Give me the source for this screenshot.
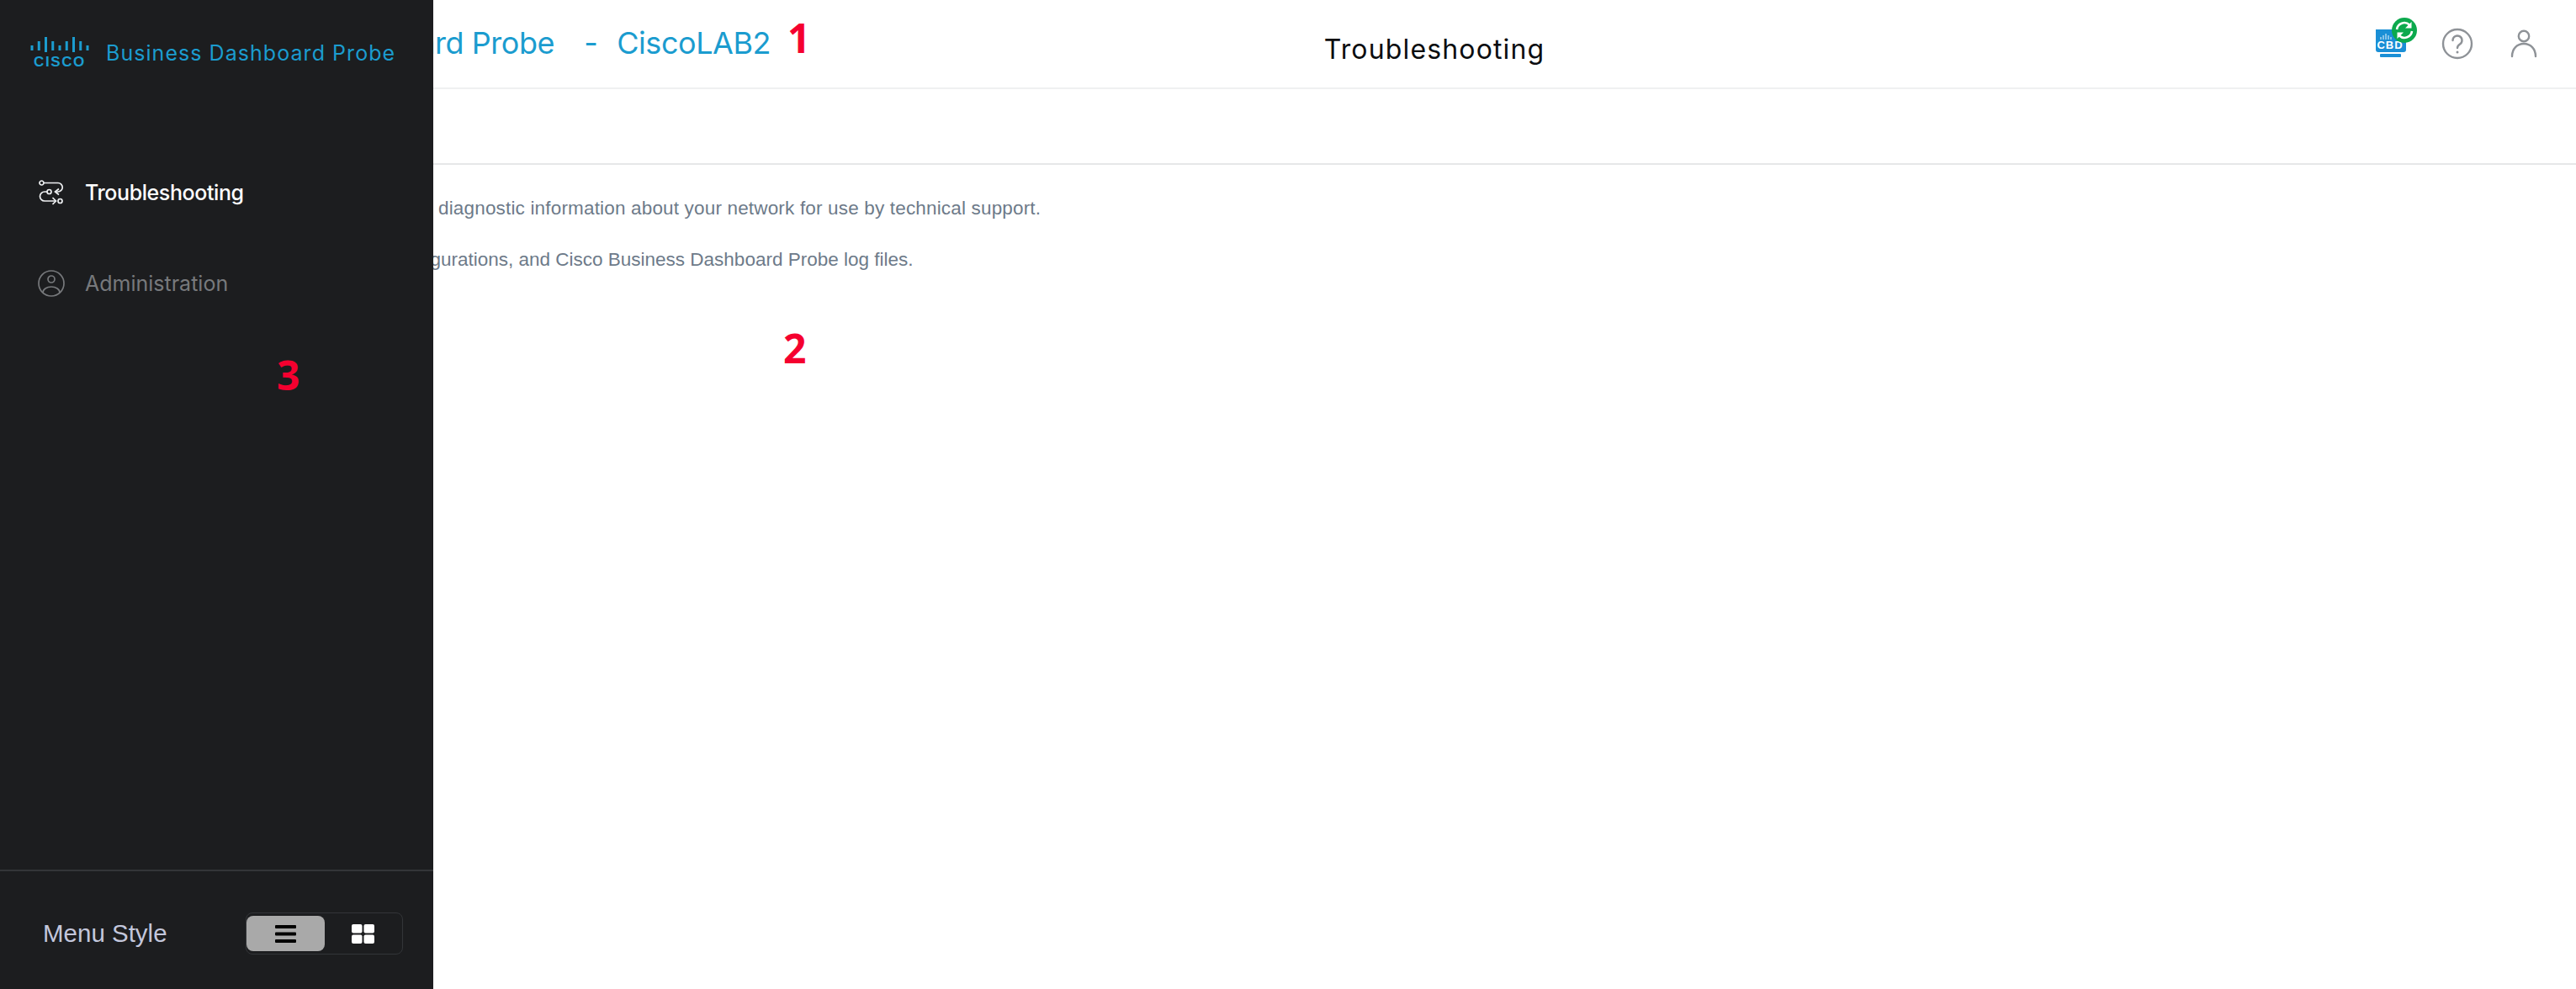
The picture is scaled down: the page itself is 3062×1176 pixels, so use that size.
<script>
	let menuStyle = 'list'
</script>

<div class="page">
	<header>
		<div class="brand">
			<span>Cisco Business Dashboard Probe</span>
			<span class="dash">-</span>
			<span>CiscoLAB2</span>
		</div>
		<h1>Troubleshooting</h1>
		<div class="tools">
			<svg class="cbd" width="60" height="50" viewBox="0 0 60 50">
				<path d="M4 15h33a3 3 0 0 1 3 3v21a3 3 0 0 1-3 3H7a3 3 0 0 1-3-3z" fill="#1a8fd6"/>
				<rect x="9" y="44" width="25" height="4" rx="1" fill="#1a8fd6"/>
				<path d="M10 24v3M13 22v5M16 20v7M19 22v5M22 24v3" stroke="#cfe8f6" stroke-width="1.2"/>
				<text x="21" y="38" class="cbd-text">CBD</text>
				<circle cx="38" cy="16" r="15" fill="#0ca94d"/>
				<g fill="none" stroke="#fff" stroke-width="2.6">
					<path d="M29 15a9 9 0 0 1 15-5.500"/>
					<path d="M47 17a9 9 0 0 1-15 5.500"/>
				</g>
				<path d="M46.500 6v7.500H39zM29.500 26v-7.500H37z" fill="#fff"/>
			</svg>
			<svg width="38" height="38" viewBox="0 0 38 38" fill="none" stroke="#8e9297" stroke-width="2.4">
				<circle cx="19" cy="19" r="17"/>
				<path d="M13.500 15a5.500 5.500 0 1 1 8.500 4.600c-2 1.300-3 2.200-3 4.400" stroke-linecap="round"/>
				<circle cx="19" cy="29" r="1.500" fill="#8e9297" stroke="none"/>
			</svg>
			<svg width="32" height="34" viewBox="0 0 32 34" fill="none" stroke="#8e9297" stroke-width="2.4">
				<circle cx="16" cy="8" r="6.200"/>
				<path d="M2 32c0-9 6-15 14-15s14 6 14 15" stroke-linecap="round"/>
			</svg>
		</div>
	</header>
	<div class="subbar"></div>
	<main>
		<p class="wide">Use this page to gather and share diagnostic information about your network for use by technical support.</p>
		<p>The files include logs, device configurations, and Cisco Business Dashboard Probe log files.</p>
	</main>

	<aside>
		<div class="logo">
			<div class="cisco">
				<svg width="72" height="20" viewBox="0 0 72 20" stroke="#1b9ccf" stroke-width="3">
					<path d="M3 11v6M11.250 6v11M19.500 1v18M27.750 6v11M36 11v6M44.250 6v11M52.500 1v18M60.750 6v11M69 11v6"/>
				</svg>
				<span>CISCO</span>
			</div>
			<span class="product">Business Dashboard Probe</span>
		</div>

		<nav>
			<div class="item active">
				<svg width="30" height="30" viewBox="0 0 30 30" fill="none" stroke="#eef0f2" stroke-width="1.7">
					<circle cx="3.500" cy="3.500" r="2.500"/>
					<path d="M6 3.500H23a5.250 5.250 0 0 1 0 10.500h-3"/>
					<path d="M24 10.500 19.500 14l4.500 3.500"/>
					<circle cx="12.500" cy="14" r="2.500"/>
					<path d="M10 14H7a5.500 5.500 0 0 0 0 11h13"/>
					<path d="M16.500 21l4 4-4 4"/>
					<circle cx="25.500" cy="25" r="2.500"/>
				</svg>
				<span>Troubleshooting</span>
			</div>
			<div class="item">
				<svg width="32" height="32" viewBox="0 0 32 32" fill="none" stroke="#77797c" stroke-width="1.7">
					<circle cx="16" cy="16" r="15"/>
					<circle cx="16" cy="11" r="4"/>
					<path d="M6 27c0-4 4.500-7 10-7s10 3 10 7"/>
				</svg>
				<span>Administration</span>
			</div>
		</nav>

		<div class="foot">
			<span>Menu Style</span>
			<div class="toggle">
				<button class:on={menuStyle === 'list'} onclick={() => menuStyle = 'list'} aria-label="List">
					<svg width="25" height="21" viewBox="0 0 25 21" fill="currentColor">
						<rect width="25" height="4" rx="1"/>
						<rect y="8.500" width="25" height="4" rx="1"/>
						<rect y="17" width="25" height="4" rx="1"/>
					</svg>
				</button>
				<button class:on={menuStyle === 'grid'} onclick={() => menuStyle = 'grid'} aria-label="Grid">
					<svg width="27" height="23" viewBox="0 0 27 23" fill="currentColor">
						<rect width="12.500" height="10.500" rx="2"/>
						<rect x="14.500" width="12.500" height="10.500" rx="2"/>
						<rect y="12.500" width="12.500" height="10.500" rx="2"/>
						<rect x="14.500" y="12.500" width="12.500" height="10.500" rx="2"/>
					</svg>
				</button>
			</div>
		</div>
	</aside>

	<span class="mark one">1</span>
	<span class="mark two">2</span>
	<span class="mark three">3</span>
</div>

<style>
	:global(*) {
		box-sizing: border-box;
	}

	:global(body) {
		background: #fff;
		overflow: hidden;
	}

	.page {
		position: relative;
		height: 1176px;
		font-family: "Liberation Sans", sans-serif;
	}

	header {
		height: 106px;
		padding-left: 348px;
		border-bottom: 2px solid #eff0f1;
		display: grid;
		grid-template-columns: 1fr auto 1fr;
		align-items: center;
	}

	.brand {
		margin-left: -241px;
		display: flex;
		gap: 35px;
		font-family: Inter, sans-serif;
		font-size: 36px;
		letter-spacing: -0.45px;
		color: #1b9ccf;
		white-space: nowrap;
		padding-bottom: 3px;
	}

	.dash {
		margin-right: -12px;
	}

	h1 {
		margin: 0;
		font-family: Inter, sans-serif;
		font-size: 32px;
		font-weight: 400;
		letter-spacing: 1.15px;
		color: #0b0d10;
		padding-top: 12px;
	}

	.tools {
		display: flex;
		justify-content: flex-end;
		align-items: center;
		padding-right: 46px;
		gap: 44px;
	}

	.cbd {
		margin: -14px -22px 0 0;
	}

	.cbd-text {
		font-family: "Liberation Sans", sans-serif;
		font-size: 13px;
		font-weight: 700;
		fill: #fff;
		text-anchor: middle;
		letter-spacing: 1px;
	}

	.subbar {
		height: 90px;
		border-bottom: 2px solid #e6e7e8;
	}

	main {
		padding: 38px 0 0 170px;
		font-size: 22.5px;
		color: #6d7a89;
	}

	main p {
		margin: 0 0 34px;
		height: 27px;
		line-height: 27px;
		white-space: nowrap;
	}

	main p.wide {
		letter-spacing: 0.17px;
	}

	aside {
		position: absolute;
		left: 0;
		top: 0;
		bottom: 0;
		width: 515px;
		background: #1c1d1f;
		display: flex;
		flex-direction: column;
		font-family: Inter, sans-serif;
	}

	.logo {
		height: 122px;
		display: flex;
		align-items: center;
		padding-left: 35px;
		gap: 19px;
	}

	.cisco {
		display: flex;
		flex-direction: column;
		align-items: center;
		gap: 4px;
		color: #1b9ccf;
		padding-top: 2px;
	}

	.cisco svg {
		display: block;
	}

	.cisco span {
		font-family: "Liberation Sans", sans-serif;
		font-size: 17px;
		line-height: 14px;
		font-weight: 700;
		letter-spacing: 1.6px;
	}

	.product {
		font-size: 25px;
		letter-spacing: 1.05px;
		color: #1b9ccf;
		padding-top: 4px;
	}

	nav {
		flex: 1;
		padding-top: 53px;
	}

	.item {
		display: flex;
		align-items: center;
		height: 108px;
		gap: 24px;
		padding-left: 45px;
		font-size: 25px;
		color: #77797c;
	}

	.item svg {
		width: 32px;
	}

	.item.active {
		color: #fff;
		font-weight: 500;
		letter-spacing: -0.4px;
	}

	.foot {
		height: 142px;
		padding: 8px 36px 0 51px;
		border-top: 2px solid #333538;
		display: flex;
		align-items: center;
		justify-content: space-between;
		font-family: "Liberation Sans", sans-serif;
		font-size: 29.5px;
		color: #c3c7dc;
	}

	.toggle {
		display: flex;
		width: 187px;
		height: 50px;
		border: 1px solid #333538;
		border-radius: 8px;
		padding: 3px 0;
	}

	.toggle button {
		flex: 1;
		display: flex;
		align-items: center;
		justify-content: center;
		background: none;
		border: 0;
		border-radius: 8px;
		padding: 0;
		color: #fff;
	}

	.toggle button.on {
		background: #a9a9a9;
		color: #000;
	}

	.mark {
		position: absolute;
		font-family: "Open Sans", sans-serif;
		font-weight: 700;
		font-size: 48px;
		line-height: 1;
		color: #f5002f;
	}

	.one {
		left: 936px;
		top: 21px;
	}

	.two {
		left: 931px;
		top: 390px;
	}

	.three {
		left: 329px;
		top: 422px;
	}
</style>
